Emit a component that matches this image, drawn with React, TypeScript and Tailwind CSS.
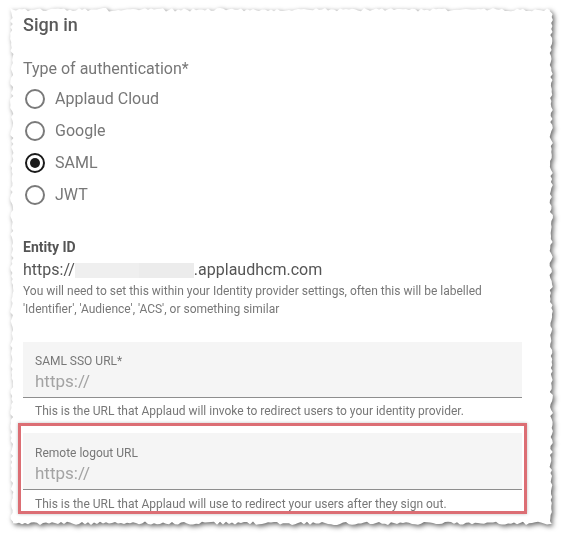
import React from 'react'

const PAPER_W = 543
const PAPER_H = 517

// small seeded random so the torn edge is the same on every render
function makeRandom(seed: number) {
  let s = seed
  return () => {
    s = (s * 16807) % 2147483647
    return (s - 1) / 2147483646
  }
}

function tornEdge(w: number, h: number): string {
  const rnd = makeRandom(42)
  const pts: string[] = []
  const step = 3
  const amp = 3.4
  for (let x = 0; x < w; x += step) pts.push(`${x}px ${(rnd() * amp).toFixed(1)}px`)
  for (let y = 0; y < h; y += step) pts.push(`${(w - rnd() * amp).toFixed(1)}px ${y}px`)
  for (let x = w; x > 0; x -= step) pts.push(`${x}px ${(h - rnd() * amp).toFixed(1)}px`)
  for (let y = h; y > 0; y -= step) pts.push(`${(rnd() * amp).toFixed(1)}px ${y}px`)
  return `polygon(${pts.join(', ')})`
}

const options = ['Applaud Cloud', 'Google', 'SAML', 'JWT']

function Radio({ label, checked }: { label: string; checked: boolean }) {
  return (
    <div className="flex h-8 items-center">
      <div
        className={`ml-[2px] flex h-[20px] w-[20px] items-center justify-center rounded-full border-2 ${
          checked ? 'border-[#1a1a1a]' : 'border-[#7a7a7a]'
        }`}
      >
        {checked && <div className="h-[10px] w-[10px] rounded-full bg-[#1a1a1a]" />}
      </div>
      <span className="ml-[10px] text-[16px] text-[#777]">{label}</span>
    </div>
  )
}

function UrlField({ label, help, boxed }: { label: string; help: string; boxed?: boolean }) {
  return (
    <div>
      <div
        className={`border-b border-[#8e8e8e] bg-[#f5f5f5] px-3 ${
          boxed ? 'h-[57px] pt-[13px]' : 'h-[56px] pt-[12px]'
        }`}
      >
        <div className="text-[12px] leading-[14px] text-[#777]">{label}</div>
        <div className="mt-[3px] text-[17px] leading-[20px] text-[#a3a3a3]">https://</div>
      </div>
      <div
        className={`px-3 text-[12px] leading-[18px] text-[#777] ${
          boxed ? 'h-[21px] pt-[5px]' : 'pt-[4px]'
        }`}
      >
        {help}
      </div>
    </div>
  )
}

export default function App() {
  return (
    <div className="h-[538px] w-[564px] bg-white font-['Roboto',sans-serif]">
      <div className="ml-[10px] pt-[8px] drop-shadow-[2px_2px_2.5px_rgba(0,0,0,0.6)]">
        <div
          className="bg-white pl-[13px] pr-[31px]"
          style={{ width: PAPER_W, height: PAPER_H, clipPath: tornEdge(PAPER_W, PAPER_H) }}
        >
          <h2 className="pt-[7px] text-[18px] font-medium leading-[20px] text-[#5a5a5a]">Sign in</h2>

          <div className="mt-[22px] text-[16px] leading-[24px] text-[#777]">Type of authentication*</div>
          <div className="mt-[2px]">
            {options.map(o => (
              <Radio key={o} label={o} checked={o === 'SAML'} />
            ))}
          </div>

          <div className="mt-[28px] text-[14px] font-bold leading-[16px] text-[#555]">Entity ID</div>
          <div className="mt-[4px] flex items-center text-[16px] leading-[22px] text-[#555]">
            <span>https://</span>
            <span className="flex h-[15px]">
              <span className="w-[64px] bg-[#efefef]" />
              <span className="w-[55px] bg-[#ececec]" />
            </span>
            <span>.applaudhcm.com</span>
          </div>
          <div className="mt-[1px] text-[12px] leading-[18px] text-[#777]">
            You will need to set this within your Identity provider settings, often this will be labelled
            <br />
            'Identifier', 'Audience', 'ACS', or something similar
          </div>

          <div className="mt-[24px]">
            <UrlField
              label="SAML SSO URL*"
              help="This is the URL that Applaud will invoke to redirect users to your identity provider."
            />
          </div>

          <div className="mx-[-5px] mt-[3px] border-[3px] border-[#dc6e74] px-[2px] pt-[7px] shadow-[0_0_3px_rgba(0,0,0,0.25)]">
            <UrlField
              boxed
              label="Remote logout URL"
              help="This is the URL that Applaud will use to redirect your users after they sign out."
            />
          </div>
        </div>
      </div>
    </div>
  )
}
